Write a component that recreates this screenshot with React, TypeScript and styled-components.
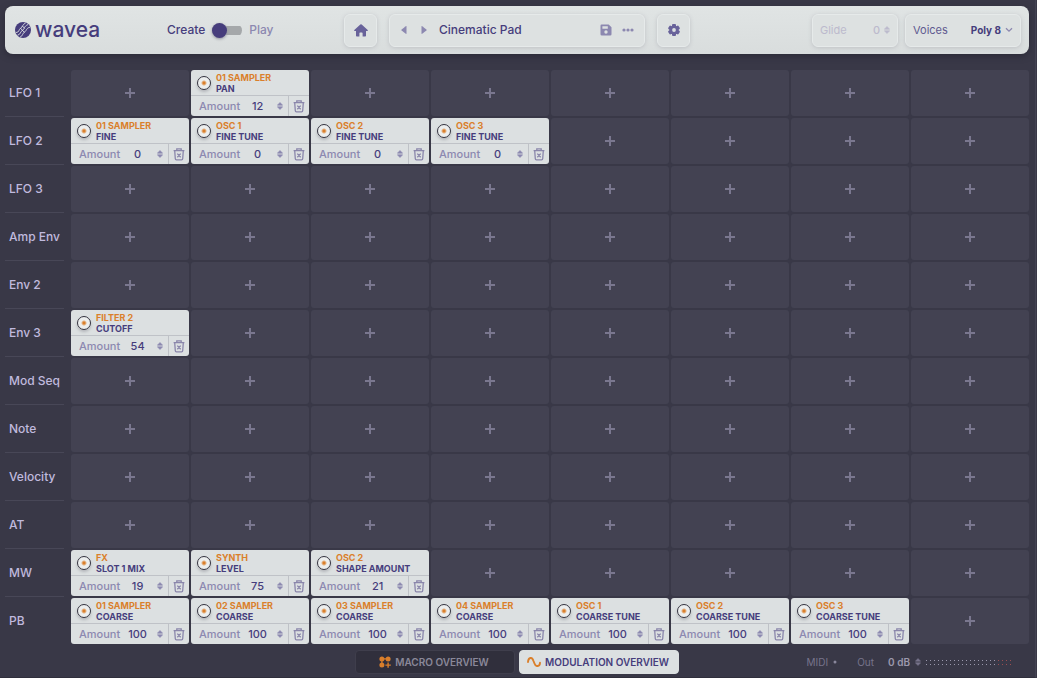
import React, { useState } from "react";
import styled, { createGlobalStyle, css } from "styled-components";

const ink = "#463d7c";
const muted = "#8c88b0";
const orange = "#da7f2b";
const paper = "#dce0e1";

const GlobalStyle = createGlobalStyle`
  *, *::before, *::after { box-sizing: border-box; }
  body {
    margin: 0;
    background: #393847;
    font-family: Inter, "Liberation Sans", sans-serif;
    color: ${ink};
  }
  button, input, select {
    font: inherit;
    color: inherit;
    border: 0;
    padding: 0;
    margin: 0;
    background: none;
  }
  button { cursor: pointer; }
  svg { flex: none; display: block; }
`;

const Page = styled.div`
  min-height: 100vh;
  margin-right: 1px;
  padding: 6px 6px 2px 5px;
  border-right: 1px solid #444353;
  border-bottom: 1px solid #302f3c;
`;

const Header = styled.header`
  display: grid;
  grid-template-columns: 1fr auto 1fr;
  align-items: center;
  height: 48px;
  padding: 0 8px;
  border-radius: 8px;
  background: linear-gradient(#e0e4e4, #d9dddd);
  box-shadow: 0 2px 6px #2c2b38;
`;

const HeaderSide = styled.div<{ $end?: boolean }>`
  display: flex;
  align-items: center;
  gap: ${(p) => (p.$end ? "7px" : "68px")};
  justify-content: ${(p) => (p.$end ? "flex-end" : "flex-start")};
`;

const HeaderCentre = styled.div`
  display: flex;
  align-items: center;
  gap: 12px;
`;

const Brand = styled.a`
  display: flex;
  align-items: center;
  gap: 4px;
  width: 86px;
  padding-left: 2px;
  color: ${ink};
  font-size: 21px;
  font-weight: 500;
  line-height: 32px;
  text-decoration: none;
`;

const ModeSwitch = styled.label`
  display: flex;
  align-items: center;
  gap: 7px;
  font-size: 12px;
  font-weight: 500;
  line-height: 16px;
  cursor: pointer;
`;

const ModeName = styled.span<{ $on: boolean }>`
  color: ${(p) => (p.$on ? ink : muted)};
`;

const Toggle = styled.input`
  appearance: none;
  width: 30px;
  height: 15px;
  display: flex;
  align-items: center;
  border-radius: 8px;
  background: linear-gradient(#a5a8aa, #a5a8aa) center / 100% 9px no-repeat;
  cursor: pointer;
  &::before {
    content: "";
    width: 15px;
    height: 15px;
    border-radius: 50%;
    background: ${ink};
    box-shadow: 0 1px 3px #8d8f9c;
  }
  &:checked { justify-content: flex-end; }
`;

const raised = css`
  border: 1px solid #e6eaea;
  border-radius: 6px;
  background: #dde1e1;
  box-shadow: 0 1px 4px #bfc2c6;
`;

const IconButton = styled.button`
  ${raised}
  display: grid;
  place-items: center;
  width: 33px;
  height: 33px;
  color: #68629a;
`;

const PresetBar = styled.div`
  ${raised}
  display: flex;
  align-items: center;
  width: 256px;
  height: 33px;
  padding: 0 6px 0 4px;
`;

const PresetActions = styled.div`
  display: flex;
  gap: 2px;
`;

const PlainButton = styled.button`
  display: grid;
  place-items: center;
  width: 20px;
  height: 16px;
  color: ${muted};
`;

const PresetName = styled.span`
  flex: 1;
  padding-left: 5px;
  color: ${ink};
  font-size: 12px;
  font-weight: 500;
  line-height: 16px;
`;

const Field = styled.label<{ $wide?: boolean; $off?: boolean }>`
  ${raised}
  display: flex;
  align-items: center;
  width: ${(p) => (p.$wide ? "116px" : "86px")};
  height: 33px;
  padding: 0 7px;
  font-size: 11px;
  line-height: 16px;
  color: ${(p) => (p.$off ? "#bcbacd" : "#605a90")};
`;

const FieldName = styled.span`
  flex: 1;
`;

const FieldNumber = styled.input`
  width: 20px;
  margin-right: 4px;
  text-align: right;
  font-weight: 500;
`;

const FieldSelect = styled.select`
  appearance: none;
  margin-right: 4px;
  color: ${ink};
  font-size: 10px;
  font-weight: 700;
  text-align: right;
`;

const Matrix = styled.table`
  display: block;
  margin-top: 16px;
`;

const MatrixBody = styled.tbody`
  display: grid;
  gap: 2px;
`;

const MatrixRow = styled.tr`
  display: grid;
  grid-template-columns: 64px repeat(8, minmax(0, 1fr));
  grid-template-rows: 46px;
  gap: 2px;
`;

const SourceName = styled.th`
  display: flex;
  align-items: center;
  width: 59px;
  height: 47px;
  padding: 0 0 0 4px;
  border-bottom: 1px solid #484757;
  color: #c0bade;
  font-size: 12px;
  font-weight: 500;
  line-height: 16px;
  white-space: nowrap;
  tr:last-child > & { border-bottom-color: transparent; }
`;

const Cell = styled.td`
  display: grid;
  grid-template-columns: minmax(0, 1fr);
  padding: 0;
`;

const AddButton = styled.button`
  display: grid;
  place-items: center;
  border-radius: 3px;
  background: #434252;
  color: #7a778f;
`;

const Card = styled.div`
  display: grid;
  grid-template-columns: minmax(0, 1fr);
  grid-template-rows: 26px 20px;
  border-radius: 3px;
  background: ${paper};
  overflow: hidden;
`;

const CardTop = styled.div`
  display: flex;
  align-items: center;
  gap: 5px;
  padding: 1px 0 0 6px;
  border-bottom: 1px solid #bfc2c7;
`;

const Knob = styled.button`
  width: 14px;
  height: 14px;
  border: 1px solid #34333f;
  border-radius: 50%;
  background: radial-gradient(circle, ${orange} 1px, #eceeee 3px);
  box-shadow: 0 2px 3px #b4b6bb;
`;

const Target = styled.div`
  color: ${ink};
  font-size: 9px;
  font-weight: 700;
  line-height: 11px;
  white-space: nowrap;
`;

const TargetModule = styled.div`
  color: ${orange};
`;

const CardBottom = styled.div`
  display: flex;
  align-items: stretch;
`;

const Amount = styled.label`
  flex: 1;
  min-width: 0;
  display: flex;
  align-items: center;
  padding: 0 5px 0 8px;
  color: ${muted};
  font-size: 11px;
  font-weight: 500;
  line-height: 16px;
`;

const AmountInput = styled.input`
  flex: 1;
  min-width: 0;
  margin-right: 2px;
  color: ${ink};
  text-align: center;
`;

const DeleteButton = styled.button`
  display: grid;
  place-items: center;
  width: 21px;
  border-left: 1px solid #bfc2c7;
  color: #8a86ab;
`;

const Footer = styled.footer`
  display: grid;
  grid-template-columns: 1fr auto 1fr;
  align-items: center;
  margin-top: 6px;
`;

const Tabs = styled.nav`
  grid-column: 2;
  display: flex;
  gap: 4px;
`;

const Tab = styled.button<{ $active?: boolean }>`
  display: flex;
  align-items: center;
  justify-content: center;
  gap: 4px;
  width: 160px;
  height: 24px;
  padding-right: 2px;
  border: 1px solid ${(p) => (p.$active ? paper : "#3f3e4c")};
  border-radius: 4px;
  background: ${(p) => (p.$active ? paper : "#302f3c")};
  color: ${(p) => (p.$active ? ink : "#8a8899")};
  font-size: 10px;
  font-weight: 600;
  line-height: 16px;
  white-space: nowrap;
`;

const Status = styled.div`
  display: flex;
  align-items: center;
  justify-content: flex-end;
  gap: 20px;
  padding-right: 16px;
  color: #77748c;
  font-size: 10px;
  line-height: 16px;
`;

const StatusItem = styled.span`
  display: flex;
  align-items: center;
  gap: 5px;
`;

const OutputLevel = styled.label`
  display: flex;
  align-items: center;
  gap: 5px;
`;

const OutputInput = styled.input`
  width: 31px;
  color: #9c99ad;
  font-weight: 600;
  text-align: right;
`;

const Logo = () => (
  <svg width="16" height="16" viewBox="0 0 16 16" aria-hidden="true">
    <circle cx="8" cy="8" r="8" fill={ink} />
    <g fill="none" stroke={paper} strokeWidth="0.9" strokeLinecap="round">
      <path d="M1.200 10.600C4.400 10.600 3.600 7.400 5.600 6.200C8 4.800 7.200 2.600 10.400 1" />
      <path d="M2.800 13.200C6 12.400 5 9.600 7.400 8.400C10 7 8.600 4.200 12.800 2.600" />
      <path d="M5.400 15C8.400 13.600 7 11.400 9.400 10.200C11.800 8.800 11 6 14.800 5.200" />
      <path d="M5.600 6.200L7.400 8.400M7.600 4.200L9.400 6.200M7.400 8.400L9.400 10.200" />
    </g>
  </svg>
);

const Home = () => (
  <svg width="14" height="13" viewBox="0 0 14 13" fill="currentColor" aria-hidden="true">
    <path d="M6.300 0.500Q7 -0.100 7.700 0.500L13.700 6Q14.300 6.900 13.300 7H12V11.800Q12 12.600 11.200 12.600H8.600V9.200Q8.600 8.400 7.900 8.400H6.100Q5.400 8.400 5.400 9.200V12.600H2.800Q2 12.600 2 11.800V7H0.700Q-0.300 6.900 0.300 6Z" />
  </svg>
);

const Arrow = ({ right = false }: { right?: boolean }) => (
  <svg width="6" height="8" viewBox="0 0 6 8" fill="currentColor" aria-hidden="true">
    <path d={right ? "M0.500 0.500Q0.500 -0.200 1.200 0.200L5.400 3.500Q6 4 5.400 4.500L1.200 7.800Q0.500 8.200 0.500 7.500Z" : "M5.500 0.500Q5.500 -0.200 4.800 0.200L0.600 3.500Q0 4 0.600 4.500L4.800 7.800Q5.500 8.200 5.500 7.500Z"} />
  </svg>
);

const Save = () => (
  <svg width="12" height="12" viewBox="0 0 12 12" fill="currentColor" fillRule="evenodd" aria-hidden="true">
    <path d="M1.500 0.500H8.700L11.500 3.300V10.200Q11.500 11.500 10.200 11.500H1.800Q0.500 11.500 0.500 10.200V1.700Q0.500 0.500 1.500 0.500ZM2.400 2.300V4.700H7.800V2.300ZM6 6.300A1.700 1.700 0 1 0 6 9.700A1.700 1.700 0 1 0 6 6.300Z" />
  </svg>
);

const Dots = () => (
  <svg width="12" height="4" viewBox="0 0 12 4" fill="currentColor" aria-hidden="true">
    <circle cx="2" cy="2" r="1.600" /><circle cx="6" cy="2" r="1.600" /><circle cx="10" cy="2" r="1.600" />
  </svg>
);

const Gear = () => (
  <svg width="14" height="14" viewBox="0 0 14 14" aria-hidden="true">
    <g fill="currentColor">
      {[0, 60, 120].map((a) => (
        <rect key={a} x="5" y="1" width="4" height="12" rx="1" transform={`rotate(${a} 7 7)`} />
      ))}
      <circle cx="7" cy="7" r="4.600" />
    </g>
    <circle cx="7" cy="7" r="1.900" fill={paper} />
  </svg>
);

const Stepper = () => (
  <svg width="6" height="8" viewBox="0 0 6 8" fill="currentColor" stroke="currentColor" strokeWidth="0.600" strokeLinejoin="round" aria-hidden="true">
    <path d="M3 0.500L5.600 3.200H0.400ZM3 7.500L5.600 4.800H0.400Z" />
  </svg>
);

const Chevron = () => (
  <svg width="8" height="6" viewBox="0 0 8 6" fill="none" stroke={muted} strokeWidth="1.300" aria-hidden="true">
    <path d="M1 1.200L4 4.200L7 1.200" />
  </svg>
);

const Plus = () => (
  <svg width="12" height="12" viewBox="0 0 12 12" stroke="currentColor" strokeWidth="2" aria-hidden="true">
    <path d="M6 1V11M1 6H11" />
  </svg>
);

const Trash = () => (
  <svg width="12" height="13" viewBox="0 0 12 13" fill="none" stroke="currentColor" strokeWidth="1.300" aria-hidden="true">
    <path d="M0.600 2.600H11.400M3.800 2.400V0.900H8.200V2.400M1.700 2.800L2.300 10.800Q2.400 11.800 3.400 11.800H8.600Q9.600 11.800 9.700 10.800L10.300 2.800M4.300 5.600L7.700 9.200M7.700 5.600L4.300 9.200" />
  </svg>
);

const MacroIcon = () => (
  <svg width="12" height="12" viewBox="0 0 12 12" fill={orange} aria-hidden="true">
    <circle cx="2.900" cy="2.900" r="2.500" /><circle cx="9.100" cy="2.900" r="2.500" /><circle cx="2.900" cy="9.100" r="2.500" />
    <path d="M2.900 2.300H9V3.500H2.900ZM2.300 2.900H3.500V9H2.300ZM8.400 6.400H9.800V8.400H11.800V9.800H9.800V11.800H8.400V9.800H6.400V8.400H8.400Z" />
  </svg>
);

const Wave = () => (
  <svg width="14" height="10" viewBox="0 0 14 10" fill="none" stroke={orange} strokeWidth="1.900" strokeLinecap="round" aria-hidden="true">
    <path d="M1 5C1.300 0 5.200 -0.400 6.500 4L7.500 6.500C8.800 10.400 12.900 9.600 13 5.800" />
  </svg>
);

const Meter = () => (
  <svg width="87" height="5" viewBox="0 0 87 5" aria-hidden="true">
    {Array.from({ length: 22 }, (_, i) =>
      [0, 4].map((y) => (
        <rect key={`${i}-${y}`} x={i * 4} y={y} width="1" height="1" fill={i > 17 ? "#9a4f52" : "#9a98ac"} />
      ))
    )}
  </svg>
);

type Slot = [module: string, parameter: string, amount: number];
type Source = { name: string; slots: (Slot | null)[] };

const COLUMNS = 8;

const sources: Source[] = [
  { name: "LFO 1", slots: [null, ["01 SAMPLER", "PAN", 12]] },
  {
    name: "LFO 2",
    slots: [["01 SAMPLER", "FINE", 0], ["OSC 1", "FINE TUNE", 0], ["OSC 2", "FINE TUNE", 0], ["OSC 3", "FINE TUNE", 0]],
  },
  { name: "LFO 3", slots: [] },
  { name: "Amp Env", slots: [] },
  { name: "Env 2", slots: [] },
  { name: "Env 3", slots: [["FILTER 2", "CUTOFF", 54]] },
  { name: "Mod Seq", slots: [] },
  { name: "Note", slots: [] },
  { name: "Velocity", slots: [] },
  { name: "AT", slots: [] },
  { name: "MW", slots: [["FX", "SLOT 1 MIX", 19], ["SYNTH", "LEVEL", 75], ["OSC 2", "SHAPE AMOUNT", 21]] },
  {
    name: "PB",
    slots: [
      ["01 SAMPLER", "COARSE", 100],
      ["02 SAMPLER", "COARSE", 100],
      ["03 SAMPLER", "COARSE", 100],
      ["04 SAMPLER", "COARSE", 100],
      ["OSC 1", "COARSE TUNE", 100],
      ["OSC 2", "COARSE TUNE", 100],
      ["OSC 3", "COARSE TUNE", 100],
    ],
  },
];

const SlotCard = ({ slot }: { slot: Slot }) => (
  <Card>
    <CardTop>
      <Knob aria-label="Toggle modulation" />
      <Target>
        <TargetModule>{slot[0]}</TargetModule>
        {slot[1]}
      </Target>
    </CardTop>
    <CardBottom>
      <Amount>
        Amount
        <AmountInput defaultValue={slot[2]} />
        <Stepper />
      </Amount>
      <DeleteButton aria-label="Remove modulation">
        <Trash />
      </DeleteButton>
    </CardBottom>
  </Card>
);

export default function App() {
  const [play, setPlay] = useState(false);
  return (
    <Page>
      <GlobalStyle />
      <Header>
        <HeaderSide>
          <Brand href="#">
            <Logo />
            wavea
          </Brand>
          <ModeSwitch>
            <ModeName $on={!play}>Create</ModeName>
            <Toggle type="checkbox" checked={play} onChange={(e) => setPlay(e.target.checked)} />
            <ModeName $on={play}>Play</ModeName>
          </ModeSwitch>
        </HeaderSide>
        <HeaderCentre>
          <IconButton aria-label="Home"><Home /></IconButton>
          <PresetBar>
            <PlainButton aria-label="Previous preset"><Arrow /></PlainButton>
            <PlainButton aria-label="Next preset"><Arrow right /></PlainButton>
            <PresetName>Cinematic Pad</PresetName>
            <PresetActions>
              <PlainButton aria-label="Save preset"><Save /></PlainButton>
              <PlainButton aria-label="More"><Dots /></PlainButton>
            </PresetActions>
          </PresetBar>
          <IconButton aria-label="Settings"><Gear /></IconButton>
        </HeaderCentre>
        <HeaderSide $end>
          <Field $off>
            <FieldName>Glide</FieldName>
            <FieldNumber defaultValue="0" />
            <Stepper />
          </Field>
          <Field $wide>
            <FieldName>Voices</FieldName>
            <FieldSelect defaultValue="Poly 8">
              <option>Poly 8</option>
            </FieldSelect>
            <Chevron />
          </Field>
        </HeaderSide>
      </Header>
      <main>
        <Matrix>
          <MatrixBody>
            {sources.map((source) => (
              <MatrixRow key={source.name}>
                <SourceName scope="row">{source.name}</SourceName>
                {Array.from({ length: COLUMNS }, (_, i) => {
                  const slot = source.slots[i];
                  return (
                    <Cell key={i}>
                      {slot ? <SlotCard slot={slot} /> : <AddButton aria-label="Add modulation"><Plus /></AddButton>}
                    </Cell>
                  );
                })}
              </MatrixRow>
            ))}
          </MatrixBody>
        </Matrix>
      </main>
      <Footer>
        <Tabs>
          <Tab><MacroIcon />MACRO OVERVIEW</Tab>
          <Tab $active><Wave />MODULATION OVERVIEW</Tab>
        </Tabs>
        <Status>
          <StatusItem>MIDI <svg width="4" height="4" aria-hidden="true"><circle cx="2" cy="2" r="1.500" fill="#8a879c" /></svg></StatusItem>
          <OutputLevel>
            Out
            <OutputInput defaultValue="0 dB" />
            <Stepper />
            <Meter />
          </OutputLevel>
        </Status>
      </Footer>
    </Page>
  );
}
